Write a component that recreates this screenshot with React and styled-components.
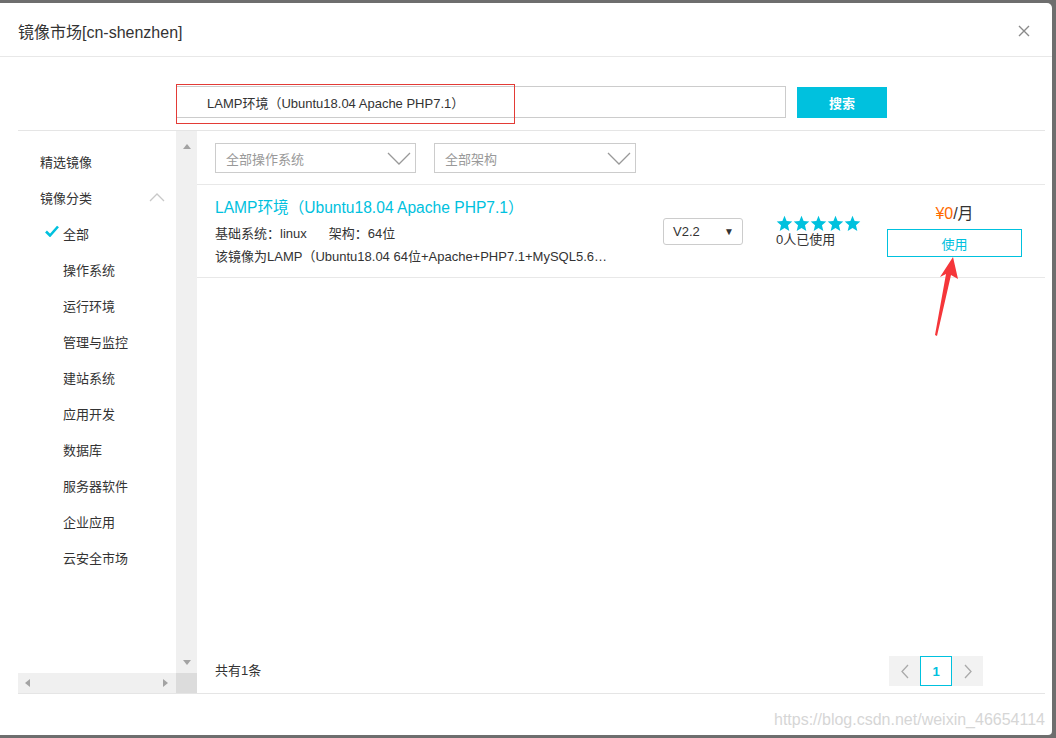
import React from "react";
import styled, { createGlobalStyle } from "styled-components";

const CYAN = "#00c1de";
const FONT = `"Liberation Sans", "Noto Sans CJK SC", sans-serif`;

const Global = createGlobalStyle`
  html, body { margin: 0; padding: 0; }
  body { font-family: ${FONT}; color: #333; background: #6e6e6e; }
`;

const Page = styled.div`
  position: relative;
  width: 1056px;
  height: 738px;
  padding: 3px 4px 3px 0;
  box-sizing: border-box;
  background: #6e6e6e;
`;

const Modal = styled.div`
  position: relative;
  height: 100%;
  background: #fff;
  border-radius: 0 5px 4px 0;
  display: flex;
  flex-direction: column;
`;

const Header = styled.div`
  height: 51px;
  padding: 2px 22px 0 18px;
  display: flex;
  align-items: center;
  justify-content: space-between;
  border-bottom: 1px solid #e8e8e8;
`;

const Title = styled.div`
  font-size: 16px;
  color: #333;
`;

const SearchBar = styled.div`
  position: relative;
  display: flex;
  gap: 11px;
  padding: 29px 0 12px 176px;
`;

const SearchInput = styled.div`
  width: 610px;
  height: 32px;
  box-sizing: border-box;
  border: 1px solid #ccc;
  padding-left: 30px;
  display: flex;
  align-items: center;
  font-size: 13px;
  color: #333;
`;

const SearchButton = styled.div`
  width: 90px;
  height: 31px;
  margin-top: 1px;
  background: ${CYAN};
  color: #fff;
  font-size: 13px;
  font-weight: bold;
  display: flex;
  align-items: center;
  justify-content: center;
`;

const Content = styled.div`
  margin: 0 7px 0 18px;
  height: 564px;
  box-sizing: border-box;
  border-top: 1px solid #e5e5e5;
  border-bottom: 1px solid #e5e5e5;
  display: grid;
  grid-template-columns: 179px 1fr;
`;

const SidePanel = styled.div`
  display: grid;
  grid-template-columns: 158px 21px;
  grid-template-rows: 1fr 20px;
  min-height: 0;
`;

const Nav = styled.div`
  padding-top: 12px;
  overflow: hidden;
`;

const NavItem = styled.div`
  height: 36px;
  display: flex;
  align-items: center;
  justify-content: space-between;
  padding-left: ${(p) => (p.$sub ? 45 : 22)}px;
  padding-right: 11px;
  font-size: 13px;
  color: #333;
  white-space: nowrap;
`;

const NavLabel = styled.span`
  display: flex;
  align-items: center;
  position: relative;
`;

const Check = styled.svg`
  position: absolute;
  left: -18px;
  top: 1px;
`;

const VScroll = styled.div`
  background: #f0f0f0;
  display: flex;
  flex-direction: column;
  justify-content: space-between;
  align-items: center;
  padding: 13px 0 8px;
`;

const HScroll = styled.div`
  background: #f0f0f0;
  display: flex;
  align-items: center;
  justify-content: space-between;
  padding: 0 8px 0 7px;
`;

const Corner = styled.div`
  background: #dcdcdc;
`;

const Tri = styled.span`
  width: 0;
  height: 0;
  border: 4px solid transparent;
  ${(p) => p.$dir === "up" && `border-bottom: 5px solid #a3a3a3; border-top-width: 0;`}
  ${(p) => p.$dir === "down" && `border-top: 5px solid #a3a3a3; border-bottom-width: 0;`}
  ${(p) => p.$dir === "left" && `border-right: 5px solid #a3a3a3; border-left-width: 0;`}
  ${(p) => p.$dir === "right" && `border-left: 5px solid #a3a3a3; border-right-width: 0;`}
`;

const Main = styled.div`
  display: flex;
  flex-direction: column;
  min-width: 0;
`;

const Filters = styled.div`
  display: flex;
  gap: 18px;
  padding: 12px 18px 11px;
  border-bottom: 1px solid #e8e8e8;
`;

const FilterSelect = styled.div`
  width: ${(p) => p.$w}px;
  height: 30px;
  box-sizing: border-box;
  border: 1px solid #ccc;
  padding: 0 4px 0 10px;
  display: flex;
  align-items: center;
  justify-content: space-between;
  font-size: 13px;
  color: #999;
`;

const Row = styled.div`
  height: 93px;
  box-sizing: border-box;
  border-bottom: 1px solid #e8e8e8;
  padding: 0 23px 0 18px;
  display: flex;
  align-items: center;
`;

const Info = styled.div`
  width: 410px;
  align-self: flex-start;
  padding-top: 13px;
`;

const ItemTitle = styled.div`
  font-size: 15.6px;
  line-height: 20px;
  color: ${CYAN};
  white-space: nowrap;
`;

const Meta = styled.div`
  margin-top: ${(p) => (p.$first ? 4 : 0)}px;
  font-size: 13px;
  line-height: 23px;
  color: #333;
  white-space: nowrap;
`;

const Gap = styled.span`
  display: inline-block;
  width: 22px;
`;

const Version = styled.div`
  margin-left: 38px;
  width: 80px;
  height: 27px;
  box-sizing: border-box;
  border: 1px solid #ccc;
  border-radius: 3px;
  padding: 0 8px 0 9px;
  display: flex;
  align-items: center;
  justify-content: space-between;
  font-size: 13px;
  color: #333;
`;

const Caret = styled.span`
  font-size: 10px;
`;

const Rating = styled.div`
  margin-left: 33px;
  width: 111px;
  display: flex;
  flex-direction: column;
`;

const Stars = styled.div`
  display: flex;
  height: 17px;
`;

const Used = styled.div`
  font-size: 13px;
  line-height: 16px;
  color: #333;
`;

const Buy = styled.div`
  width: 135px;
  display: flex;
  flex-direction: column;
  align-items: center;
  gap: 6px;
`;

const Price = styled.div`
  font-size: 16px;
  line-height: 18px;
  color: #333;
  span { color: #ff6a00; }
`;

const UseButton = styled.div`
  width: 135px;
  height: 28px;
  box-sizing: border-box;
  border: 1px solid ${CYAN};
  color: ${CYAN};
  font-size: 13px;
  display: flex;
  align-items: center;
  justify-content: center;
`;

const Footer = styled.div`
  margin-top: auto;
  padding: 0 62px 7px 18px;
  display: flex;
  align-items: center;
  justify-content: space-between;
  font-size: 13px;
  color: #333;
`;

const Total = styled.span`
  margin-top: -3px;
`;

const Pager = styled.div`
  display: flex;
  height: 30px;
  background: #f2f2f2;
`;

const PageArrow = styled.div`
  width: 31px;
  display: flex;
  align-items: center;
  justify-content: center;
`;

const PageNum = styled.div`
  width: 32px;
  box-sizing: border-box;
  border: 1px solid ${CYAN};
  background: #fff;
  color: ${CYAN};
  font-size: 13px;
  font-weight: bold;
  display: flex;
  align-items: center;
  justify-content: center;
`;

const Watermark = styled.div`
  position: absolute;
  right: 7px;
  bottom: 6px;
  font-family: "Liberation Sans", sans-serif;
  font-size: 16px;
  color: #d6d6d6;
`;

const Overlay = styled.svg`
  position: absolute;
  left: 0;
  top: 0;
  pointer-events: none;
`;

const Star = () => (
  <svg width="17" height="17" viewBox="0 0 24 24">
    <polygon
      fill={CYAN}
      points="12,1 15,8.6 23,9.2 16.9,14.4 18.8,22.5 12,18.2 5.2,22.5 7.1,14.4 1,9.2 9,8.6"
    />
  </svg>
);

const Chevron = ({ dir = "down", w = 24, h = 13, color = "#999" }) => {
  const pts = {
    down: `1,1 ${w / 2},${h - 1} ${w - 1},1`,
    up: `1,${h - 1} ${w / 2},1 ${w - 1},${h - 1}`,
    left: `${w - 1},1 1,${h / 2} ${w - 1},${h - 1}`,
    right: `1,1 ${w - 1},${h / 2} 1,${h - 1}`,
  }[dir];
  return (
    <svg width={w} height={h}>
      <polyline points={pts} fill="none" stroke={color} strokeWidth="1.3" />
    </svg>
  );
};

const categories = [
  "操作系统",
  "运行环境",
  "管理与监控",
  "建站系统",
  "应用开发",
  "数据库",
  "服务器软件",
  "企业应用",
  "云安全市场",
];

export default function App() {
  return (
    <Page>
      <Global />
      <Modal>
        <Header>
          <Title>镜像市场[cn-shenzhen]</Title>
          <svg width="12" height="12">
            <path d="M1 1 L11 11 M11 1 L1 11" stroke="#8a8a8a" strokeWidth="1.4" />
          </svg>
        </Header>

        <SearchBar>
          <SearchInput>LAMP环境（Ubuntu18.04 Apache PHP7.1）</SearchInput>
          <SearchButton>搜索</SearchButton>
        </SearchBar>

        <Content>
          <SidePanel>
            <Nav>
              <NavItem>精选镜像</NavItem>
              <NavItem>
                镜像分类
                <Chevron dir="up" w={16} h={9} color="#c8c8c8" />
              </NavItem>
              <NavItem $sub>
                <NavLabel>
                  <Check width="14" height="12" viewBox="0 0 14 12">
                    <path d="M1 6.5 L5 10.5 L13 1.5" fill="none" stroke={CYAN} strokeWidth="2.6" />
                  </Check>
                  全部
                </NavLabel>
              </NavItem>
              {categories.map((c) => (
                <NavItem $sub key={c}>
                  {c}
                </NavItem>
              ))}
            </Nav>
            <VScroll>
              <Tri $dir="up" />
              <Tri $dir="down" />
            </VScroll>
            <HScroll>
              <Tri $dir="left" />
              <Tri $dir="right" />
            </HScroll>
            <Corner />
          </SidePanel>

          <Main>
            <Filters>
              <FilterSelect $w={201}>
                全部操作系统
                <Chevron />
              </FilterSelect>
              <FilterSelect $w={202}>
                全部架构
                <Chevron />
              </FilterSelect>
            </Filters>

            <Row>
              <Info>
                <ItemTitle>LAMP环境（Ubuntu18.04 Apache PHP7.1）</ItemTitle>
                <Meta $first>
                  基础系统：linux<Gap />架构：64位
                </Meta>
                <Meta>该镜像为LAMP（Ubuntu18.04 64位+Apache+PHP7.1+MySQL5.6…</Meta>
              </Info>
              <Version>
                V2.2
                <Caret>▼</Caret>
              </Version>
              <Rating>
                <Stars>
                  {[0, 1, 2, 3, 4].map((i) => (
                    <Star key={i} />
                  ))}
                </Stars>
                <Used>0人已使用</Used>
              </Rating>
              <Buy>
                <Price>
                  <span>¥0</span>/月
                </Price>
                <UseButton>使用</UseButton>
              </Buy>
            </Row>

            <Footer>
              <Total>共有1条</Total>
              <Pager>
                <PageArrow>
                  <Chevron dir="left" w={8} h={15} color="#aaa" />
                </PageArrow>
                <PageNum>1</PageNum>
                <PageArrow>
                  <Chevron dir="right" w={8} h={15} color="#aaa" />
                </PageArrow>
              </Pager>
            </Footer>
          </Main>
        </Content>

        <Watermark>https://blog.csdn.net/weixin_46654114</Watermark>
      </Modal>

      <Overlay width="1056" height="738">
        <rect x="176.5" y="84.5" width="338" height="39" fill="none" stroke="#e33b36" strokeWidth="1" />
        <polygon
          fill="#f5363a"
          points="953,257 958,279 951,275 937,336 935,335 946,274 940,277"
        />
      </Overlay>
    </Page>
  );
}
